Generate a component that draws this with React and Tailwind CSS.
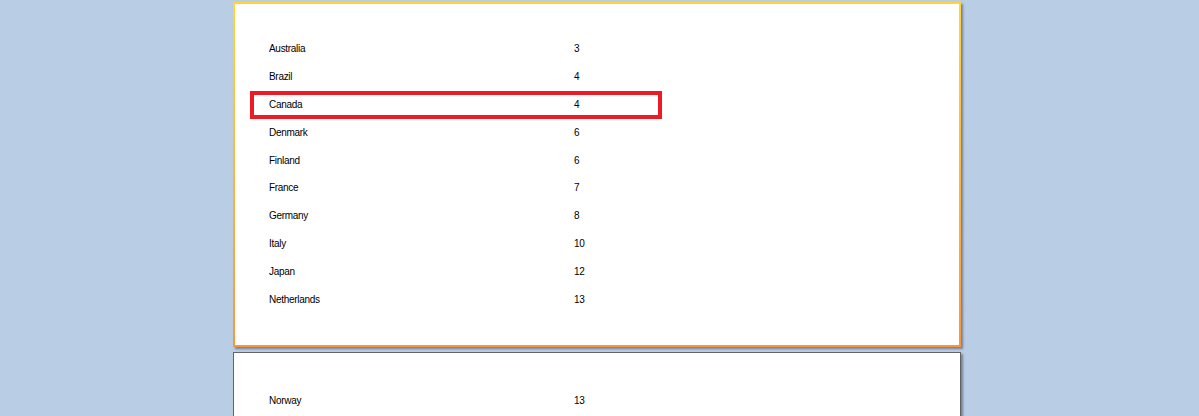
import React from "react";

const page1 = [
  ["Australia", "3"],
  ["Brazil", "4"],
  ["Canada", "4"],
  ["Denmark", "6"],
  ["Finland", "6"],
  ["France", "7"],
  ["Germany", "8"],
  ["Italy", "10"],
  ["Japan", "12"],
  ["Netherlands", "13"],
];

function Row({ name, value }) {
  return (
    <div className="flex h-[27.8px] items-center">
      <div className="w-[305px]">{name}</div>
      <div>{value}</div>
    </div>
  );
}

export default function App() {
  return (
    <div
      className="h-[416px] overflow-hidden bg-[#b9cde5] pl-[233px] pt-[2px] text-[10px] tracking-[-0.3px] text-black"
      style={{ fontFamily: '"Liberation Sans", Arial, sans-serif' }}
    >
      <div className="h-[345px] w-[728px] bg-gradient-to-b from-[#ffd43a] to-[#f7963c] p-[2px] shadow-[2px_2px_2px_rgba(60,70,90,0.55)]">
        <div className="relative h-full w-full bg-white pl-[34px] pt-[31px]">
          <div className="pointer-events-none absolute left-[15px] top-[87px] h-[28px] w-[412px] border-4 border-[#ed1c24]" />
          {page1.map(([n, v]) => (
            <Row key={n} name={n} value={v} />
          ))}
        </div>
      </div>
      <div className="mt-[5px] h-[345px] w-[728px] border border-[#646464] bg-white pl-[35px] pt-[34px] shadow-[2px_2px_2px_rgba(60,70,90,0.55)]">
        <Row name="Norway" value="13" />
      </div>
    </div>
  );
}
